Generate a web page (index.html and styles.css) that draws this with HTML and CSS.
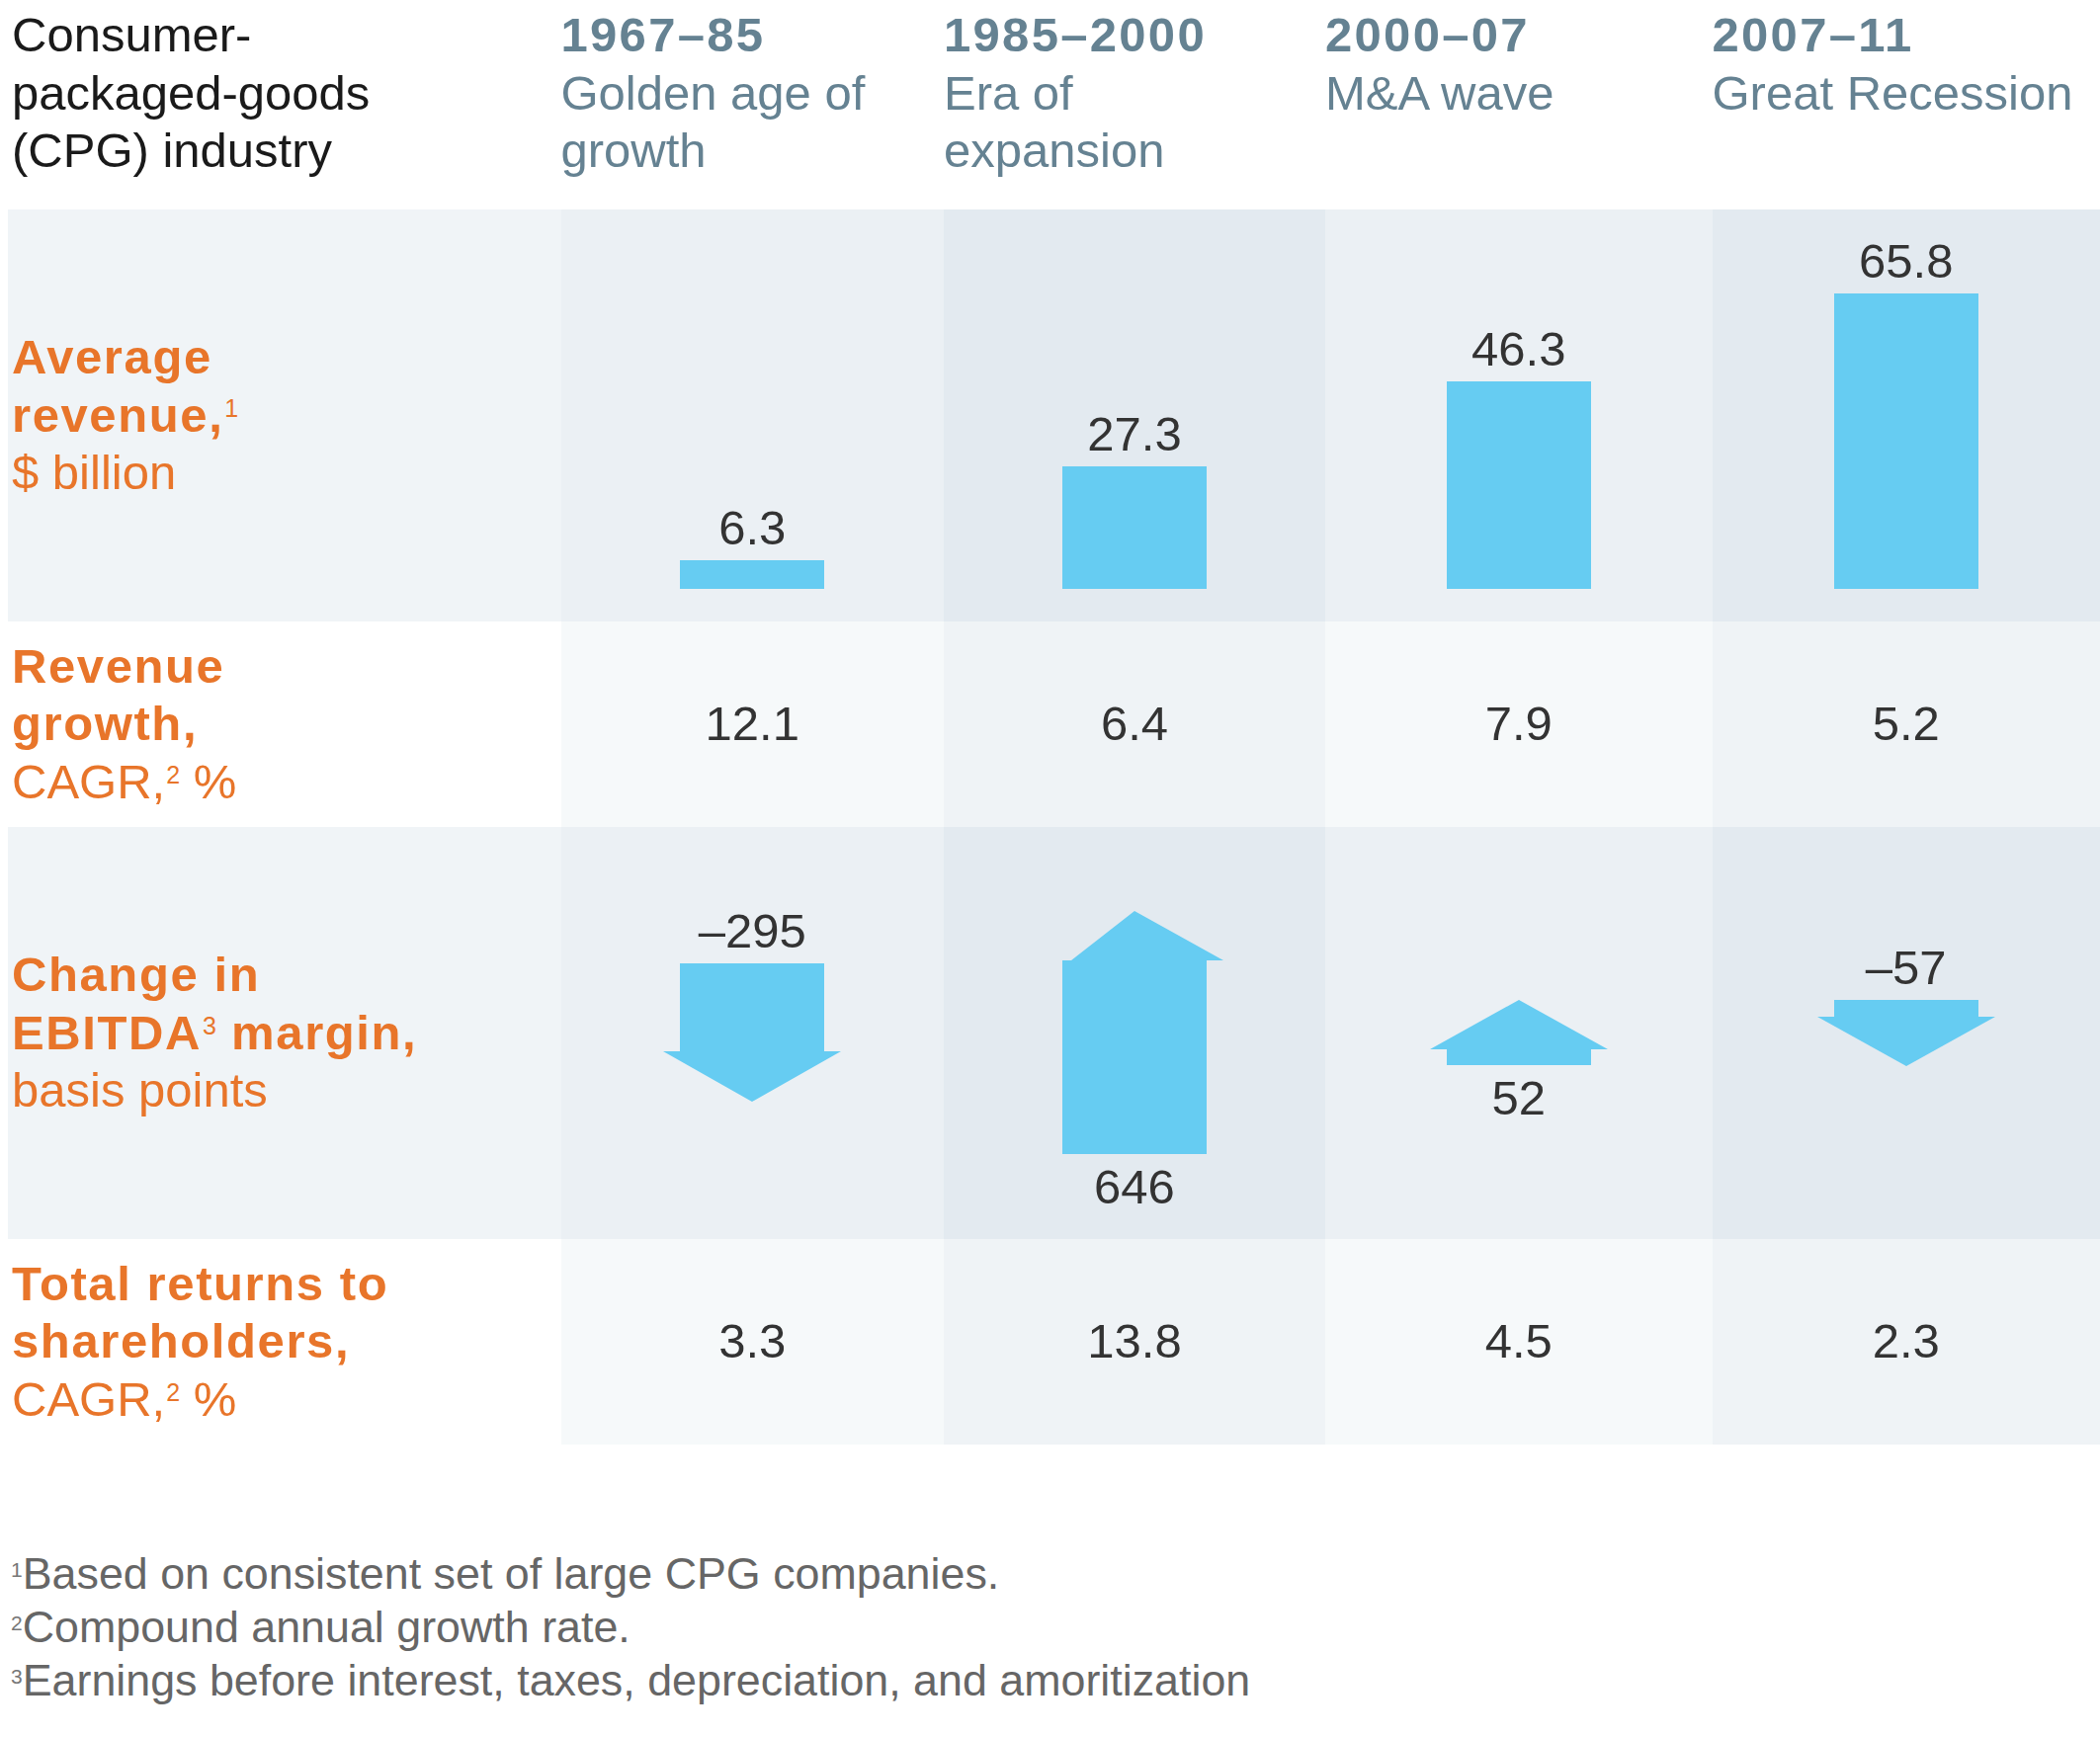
FILE: index.html
```html
<!DOCTYPE html>
<html lang="en">
<head>
<meta charset="utf-8">
<title>CPG industry eras</title>
<link rel="stylesheet" href="styles.css">
</head>
<body>
<div class="page">
  <div class="table">
    <div class="row head">
      <div class="cell label">Consumer-<br>packaged-goods<br>(CPG) industry</div>
      <div class="cell period"><b>1967–85</b><span>Golden age of<br>growth</span></div>
      <div class="cell period"><b>1985–2000</b><span>Era of<br>expansion</span></div>
      <div class="cell period"><b>2000–07</b><span>M&amp;A wave</span></div>
      <div class="cell period"><b>2007–11</b><span>Great Recession</span></div>
    </div>

    <div class="row tall shade">
      <div class="cell label"><div class="lbl"><b>Average<br>revenue,<sup>1</sup></b><br>$ billion</div></div>
      <div class="cell c1 chart"><span class="val">6.3</span><div class="bar" style="height:29px"></div></div>
      <div class="cell c2 chart"><span class="val">27.3</span><div class="bar" style="height:124px"></div></div>
      <div class="cell c3 chart"><span class="val">46.3</span><div class="bar" style="height:210px"></div></div>
      <div class="cell c4 chart"><span class="val">65.8</span><div class="bar" style="height:299px"></div></div>
    </div>

    <div class="row short light">
      <div class="cell label"><div class="lbl"><b>Revenue<br>growth,</b><br>CAGR,<sup>2</sup> %</div></div>
      <div class="cell c1 num">12.1</div>
      <div class="cell c2 num">6.4</div>
      <div class="cell c3 num">7.9</div>
      <div class="cell c4 num">5.2</div>
    </div>

    <div class="row tall shade">
      <div class="cell label"><div class="lbl"><b>Change in<br>EBITDA<sup>3</sup> margin,</b><br>basis points</div></div>
      <div class="cell c1 arrow down">
        <span class="val">–295</span>
        <svg width="180" height="140" viewBox="0 0 180 140"><polygon points="17,0 163,0 163,89 180,89 90,140 0,89 17,89"/></svg>
      </div>
      <div class="cell c2 arrow up">
        <svg width="180" height="246" viewBox="0 0 180 246"><polygon points="17,246 17,50 26,50 90,0 180,50 163,50 163,246"/></svg>
        <span class="val">646</span>
      </div>
      <div class="cell c3 arrow up">
        <svg width="180" height="66" viewBox="0 0 180 66"><polygon points="17,66 17,50 0,50 90,0 180,50 163,50 163,66"/></svg>
        <span class="val">52</span>
      </div>
      <div class="cell c4 arrow down">
        <span class="val">–57</span>
        <svg width="180" height="67" viewBox="0 0 180 67"><polygon points="17,0 163,0 163,17 180,17 90,67 0,17 17,17"/></svg>
      </div>
    </div>

    <div class="row short light">
      <div class="cell label"><div class="lbl"><b>Total returns to<br>shareholders,</b><br>CAGR,<sup>2</sup> %</div></div>
      <div class="cell c1 num">3.3</div>
      <div class="cell c2 num">13.8</div>
      <div class="cell c3 num">4.5</div>
      <div class="cell c4 num">2.3</div>
    </div>
  </div>

  <div class="notes">
    <p><sup>1</sup>Based on consistent set of large CPG companies.</p>
    <p><sup>2</sup>Compound annual growth rate.</p>
    <p><sup>3</sup>Earnings before interest, taxes, depreciation, and amoritization</p>
  </div>
</div>
</body>
</html>
```

FILE: styles.css
```css
html, body {
  margin: 0;
  padding: 0;
  background: #ffffff;
}

.page {
  padding: 6px 0 0 8px;
  font-family: "Liberation Sans", Arial, Helvetica, sans-serif;
  font-size: 49px;
  line-height: 58.5px;
  color: #1a1a1a;
}

.row {
  display: grid;
  grid-template-columns: 559.5px 387.5px 386px 391.5px 1fr;
}

.row.head {
  padding-bottom: 30px;
}

.row.tall { height: 417px; }
.row.short { height: 208px; }

.cell.label {
  padding-left: 4px;
}

.row:not(.head) .cell.label {
  display: flex;
  align-items: center;
  color: #e8752a;
}

.lbl b {
  font-weight: 700;
  letter-spacing: 1.6px;
}

.lbl sup {
  font-size: 25px;
  font-weight: 400;
  line-height: 0;
  vertical-align: 15px;
  letter-spacing: 0;
  margin-left: 1px;
}

.period {
  color: #658292;
}

.period b {
  display: block;
  font-weight: 700;
  letter-spacing: 2.3px;
}

.period span {
  display: block;
}

/* row shading */
.shade .label { background: #f0f4f7; }
.shade .c1, .shade .c3 { background: #ebf0f4; }
.shade .c2, .shade .c4 { background: #e3eaf0; }
.light .label { background: #ffffff; }
.light .c1, .light .c3 { background: #f6f9fa; }
.light .c2, .light .c4 { background: #eff3f6; }

.val, .num {
  color: #333333;
}

.num {
  display: flex;
  align-items: center;
  justify-content: center;
}

.chart {
  display: flex;
  flex-direction: column;
  align-items: center;
  justify-content: flex-end;
  padding-bottom: 33px;
}

.chart .val {
  line-height: 49px;
  margin-bottom: 8px;
}

.bar {
  width: 146px;
  background: #66ccf2;
}

.arrow {
  display: grid;
  grid-template-rows: 1fr auto 1fr;
  justify-items: center;
}

.arrow svg {
  display: block;
  grid-row: 2;
  fill: #66ccf2;
}

.arrow .val {
  line-height: 49px;
}

.down .val {
  grid-row: 1;
  align-self: end;
  margin-bottom: 8px;
}

.up .val {
  grid-row: 3;
  align-self: start;
  margin-top: 9px;
}

.notes {
  margin-top: 103px;
  padding-left: 3px;
  font-size: 44.8px;
  line-height: 54px;
  color: #666666;
}

.notes p {
  margin: 0;
}

.notes sup {
  font-size: 21px;
  line-height: 0;
  vertical-align: 12px;
  color: #777777;
}
```
